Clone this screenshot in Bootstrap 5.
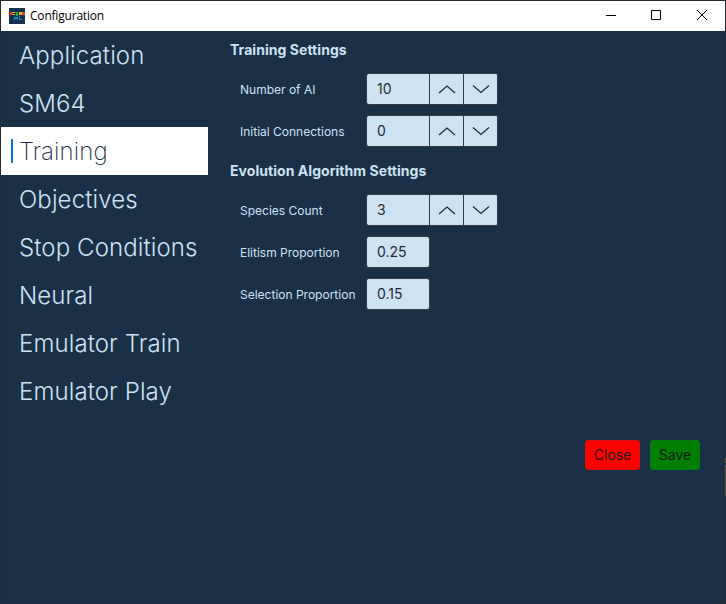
<!DOCTYPE html>
<html lang="en">
<head>
<meta charset="utf-8">
<title>Configuration</title>
<link href="https://cdn.jsdelivr.net/npm/bootstrap@5.3.0/dist/css/bootstrap.min.css" rel="stylesheet">
<style>
body{font-family:Inter,"Liberation Sans",sans-serif;background:#1a3047;color:#cde2f3}
.window{width:726px;height:604px;border:1px solid #252a32;background:#1a3047}
.titlebar{height:30px;padding-left:8px;color:#000;font:12px/30px "Noto Sans","Open Sans",sans-serif}
.caption-text{margin-left:5px;font-family:"Open Sans",sans-serif;letter-spacing:-.2px}
.win-buttons{margin-right:-2px}
.win-btn{width:46px;height:30px;border:0;background:none;padding:0}
.side{width:207px}
.side .nav-link{height:48px;padding:0 0 0 18px;font-size:24px;line-height:50px;font-weight:300;letter-spacing:.11px;color:#cde2f3;border-radius:0;white-space:nowrap}
.side .nav-link.active{background:#fff;color:#1b3048;font-weight:250}
.side .nav-link.active::before{content:"";position:absolute;left:10px;top:12px;width:2px;height:24px;background:#0078d7}
.main-pane{padding-left:22px}
.section-title{font-size:14px;line-height:20px;font-weight:700;letter-spacing:.05px;margin:9px 0 8px}
.field-row{height:42px;padding-left:10px}
.field-row label{width:126px;font-size:12px;line-height:16px;padding-top:2px;white-space:nowrap}
.value-box{width:64px;height:32px;border:1px solid #343b43;border-radius:3px;background:#cde2f3;color:#252a30;font-size:14px;font-weight:400;padding:0 10px 2px;outline:0}
.spinner .value-box{border-radius:3px 0 0 3px}
.step{width:35px;height:32px;margin-left:-1px;padding:0;border:1px solid #343b43;background:#cde2f3}
.step:last-child{border-radius:0 2px 2px 0}
.action{height:30px;padding:0;font-size:14px;line-height:28px;border-radius:3px;color:#1b1b1b}
.action-close{width:55px;background:red;border:1px solid #d90d12}
.action-save{width:50px;background:green;border:1px solid #087813}
.actions{margin:125px 25px 0 0;gap:10px}
.edge{top:458px;width:1px;height:38px;background:linear-gradient(#6b5a1d 0 5px,#1a3047 5px 7px,#6b5a1d 7px)}
</style>
</head>
<body>
<div class="position-relative overflow-hidden">
<div class="window">
<header class="titlebar bg-white d-flex align-items-center overflow-hidden">
<svg width="16" height="16" viewBox="0 0 16 16" aria-hidden="true"><path fill="#17324f" d="M0 0h16v16H0z"/><path fill="#df3528" d="M0 4h3v3H0z"/><path fill="#e2b520" d="M3 4h3v1H3zM3 6h3v1H3zM10 4h3v3h-3z"/><path fill="#35a548" d="M6 4h3v1H6zM7 5h2v3H7z"/><path fill="#dd4a20" d="M13 4h3v3h-3z"/><path fill="#168bc5" d="M5 9h1v3H5zM8 9h1v3H8zM6 9h2v2H6zM10 8h1v4h-1zM11 11h2v1h-2z"/></svg>
<span class="caption-text">Configuration</span>
<div class="win-buttons d-flex ms-auto">
<button class="win-btn" aria-label="Minimize"><svg class="d-block" width="46" height="30"><path d="M17 14.5h10" stroke="#000"/></svg></button>
<button class="win-btn" aria-label="Maximize"><svg class="d-block" width="46" height="30"><path d="M16.500 9.500h9v9h-9z" fill="none" stroke="#000"/></svg></button>
<button class="win-btn" aria-label="Close window"><svg class="d-block" width="46" height="30"><path d="M16 9l10 10M26 9L16 19" stroke="#000"/></svg></button>
</div>
</header>
<div class="d-flex">
<nav class="side nav flex-column flex-nowrap">
<a class="nav-link" href="#">Application</a>
<a class="nav-link" href="#">SM64</a>
<a class="nav-link active position-relative" href="#">Training</a>
<a class="nav-link" href="#">Objectives</a>
<a class="nav-link" href="#">Stop Conditions</a>
<a class="nav-link" href="#">Neural</a>
<a class="nav-link" href="#">Emulator Train</a>
<a class="nav-link" href="#">Emulator Play</a>
</nav>
<main class="main-pane flex-grow-1">
<h2 class="section-title">Training Settings</h2>
<div>
<div class="field-row d-flex align-items-center"><label for="ai">Number of AI</label><div class="spinner d-flex"><input class="value-box" id="ai" value="10"><button class="step" aria-label="Increase"><svg class="d-block" width="33" height="30"><path d="M9 19l8-7 8 7" fill="none" stroke="#252a30" stroke-width="1.3"/></svg></button><button class="step" aria-label="Decrease"><svg class="d-block" width="33" height="30"><path d="M9 11.500l8 7 8-7" fill="none" stroke="#252a30" stroke-width="1.3"/></svg></button></div></div>
<div class="field-row d-flex align-items-center"><label for="conn">Initial Connections</label><div class="spinner d-flex"><input class="value-box" id="conn" value="0"><button class="step" aria-label="Increase"><svg class="d-block" width="33" height="30"><path d="M9 19l8-7 8 7" fill="none" stroke="#252a30" stroke-width="1.3"/></svg></button><button class="step" aria-label="Decrease"><svg class="d-block" width="33" height="30"><path d="M9 11.500l8 7 8-7" fill="none" stroke="#252a30" stroke-width="1.3"/></svg></button></div></div>
</div>
<h2 class="section-title">Evolution Algorithm Settings</h2>
<div>
<div class="field-row d-flex align-items-center"><label for="species">Species Count</label><div class="spinner d-flex"><input class="value-box" id="species" value="3"><button class="step" aria-label="Increase"><svg class="d-block" width="33" height="30"><path d="M9 19l8-7 8 7" fill="none" stroke="#252a30" stroke-width="1.3"/></svg></button><button class="step" aria-label="Decrease"><svg class="d-block" width="33" height="30"><path d="M9 11.500l8 7 8-7" fill="none" stroke="#252a30" stroke-width="1.3"/></svg></button></div></div>
<div class="field-row d-flex align-items-center"><label for="elit">Elitism Proportion</label><input class="value-box" id="elit" value="0.25"></div>
<div class="field-row d-flex align-items-center"><label for="sel">Selection Proportion</label><input class="value-box" id="sel" value="0.15"></div>
</div>
<div class="actions d-flex justify-content-end"><button class="action action-close">Close</button><button class="action action-save">Save</button></div>
</main>
</div>
</div>
<div class="edge position-absolute end-0"></div>
</div>
<script src="https://cdn.jsdelivr.net/npm/bootstrap@5.3.0/dist/js/bootstrap.bundle.min.js"></script>
</body>
</html>
